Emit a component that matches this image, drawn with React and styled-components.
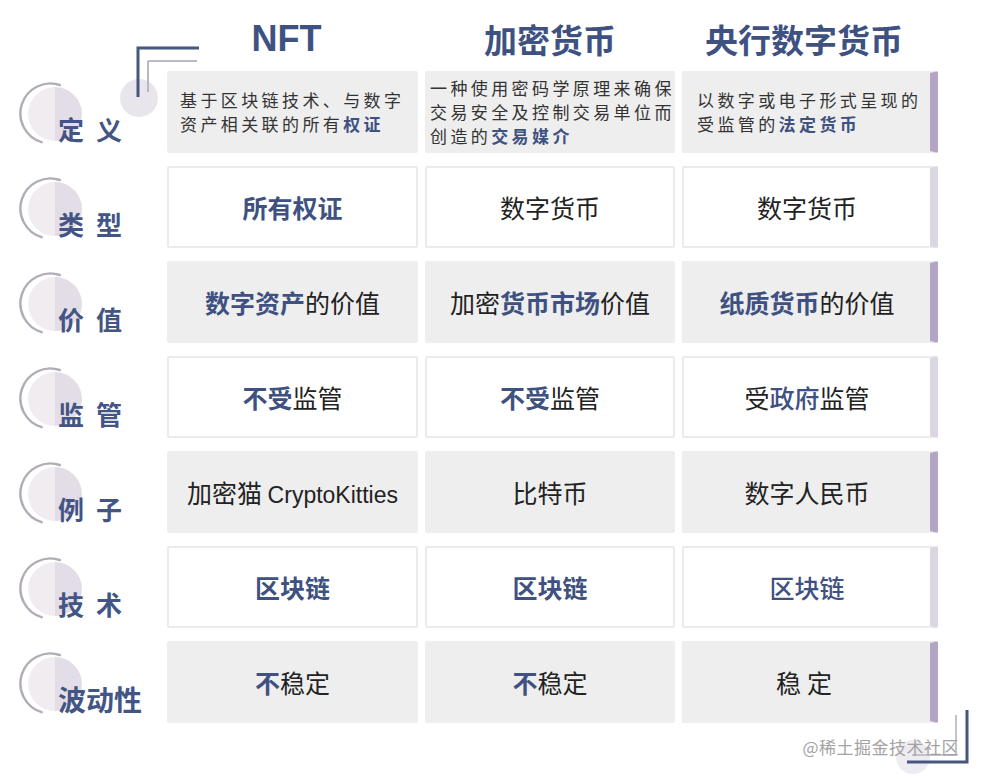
import React from "react";
import styled, { createGlobalStyle } from "styled-components";

const Global = createGlobalStyle`
  html, body { margin: 0; padding: 0; background: #ffffff; }
  body { font-family: "Noto Sans CJK SC", "Noto Sans", sans-serif; overflow: hidden; }
`;

const NAVY = "#3e5181";

const Page = styled.div`
  position: relative;
  width: 981px;
  height: 779px;
  background: #fff;
  overflow: hidden;
`;

const Table = styled.div`
  display: grid;
  grid-template-columns: 160px 251px 250px 256px;
  grid-template-rows: 58px repeat(7, 82px);
  column-gap: 7px;
  row-gap: 13px;
`;

const Head = styled.div`
  display: flex;
  align-items: center;
  justify-content: center;
  padding-top: 20px;
  padding-right: ${(p) => p.$shift || "0"};
  font-size: ${(p) => (p.$latin ? "36px" : "33px")};
  font-weight: 700;
  color: ${NAVY};
  line-height: 1;
  font-family: ${(p) =>
    p.$latin ? '"Liberation Sans", Arial, sans-serif' : '"Noto Sans CJK SC", sans-serif'};
`;

const LabelCell = styled.div`
  position: relative;
  padding-left: 58px;
  padding-top: 42px;
`;

const LabelText = styled.span`
  position: relative;
  display: block;
  font-size: ${(p) => (p.$wide ? "26px" : "28px")};
  letter-spacing: ${(p) => (p.$wide ? "12px" : "0")};
  line-height: 32px;
  font-weight: 700;
  color: #435585;
`;

const Badge = styled.svg`
  position: absolute;
  left: 17px;
  top: 7px;
  width: 72px;
  height: 72px;
`;

const Cell = styled.div`
  display: flex;
  align-items: center;
  justify-content: ${(p) => (p.$left ? "flex-start" : "center")};
  padding-left: ${(p) => (p.$pad ? p.$pad : "0")};
  background: ${(p) => (p.$grey ? "#eeeeee" : "#ffffff")};
  border: 2px solid ${(p) => (p.$grey ? "#eeeeee" : "#ebebeb")};
  border-right: ${(p) =>
    p.$bar ? `8px solid ${p.$grey ? "#b2a5c6" : "#dcd6e0"}` : `2px solid ${p.$grey ? "#eeeeee" : "#ebebeb"}`};
  border-radius: 2px;
  font-size: 25px;
  color: #222;
  white-space: nowrap;
`;

const SmallText = styled.div`
  font-size: 17px;
  line-height: 24px;
  letter-spacing: 3.4px;
  color: #333;
  white-space: nowrap;
`;

const Hi = styled.span`
  color: ${NAVY};
  font-weight: ${(p) => (p.$light ? 500 : 700)};
`;

const Latin = styled.span`
  font-family: "Liberation Sans", Arial, sans-serif;
  font-size: 23px;
`;

const Spaced = styled.span`
  letter-spacing: 6px;
`;

const Decor = styled.svg`
  position: absolute;
  pointer-events: none;
`;

const Watermark = styled.div`
  position: absolute;
  right: 22px;
  bottom: 20px;
  font-size: 17px;
  color: #a3a3a3;
  letter-spacing: 0.5px;
`;

function CircleBadge() {
  return (
    <Badge viewBox="0 0 72 72">
      <path d="M38 9 A27 27 0 0 0 38 63 Z" fill="#f1ecf0" />
      <path d="M38 9 A27 27 0 0 1 38 63 Z" fill="#e3dde7" />
      <path
        d="M42.8 7 A30 30 0 1 0 24.7 64.2"
        fill="none"
        stroke="#b1acb6"
        strokeWidth="2.4"
        strokeLinecap="round"
      />
    </Badge>
  );
}

const rows = [
  {
    label: "定义",
    wide: true,
    grey: true,
    cells: [
      <SmallText key="a">
        基于区块链技术、与数字
        <br />
        资产相关联的所有<Hi>权证</Hi>
      </SmallText>,
      <SmallText key="b">
        一种使用密码学原理来确保
        <br />
        交易安全及控制交易单位而
        <br />
        创造的<Hi>交易媒介</Hi>
      </SmallText>,
      <SmallText key="c">
        以数字或电子形式呈现的
        <br />
        受监管的<Hi>法定货币</Hi>
      </SmallText>,
    ],
    pads: ["11px", "3px", "13px"],
  },
  {
    label: "类型",
    wide: true,
    grey: false,
    cells: [<Hi key="a">所有权证</Hi>, "数字货币", "数字货币"],
  },
  {
    label: "价值",
    wide: true,
    grey: true,
    cells: [
      <span key="a">
        <Hi>数字资产</Hi>的价值
      </span>,
      <span key="b">
        加密<Hi>货币市场</Hi>价值
      </span>,
      <span key="c">
        <Hi>纸质货币</Hi>的价值
      </span>,
    ],
  },
  {
    label: "监管",
    wide: true,
    grey: false,
    cells: [
      <span key="a">
        <Hi>不受</Hi>监管
      </span>,
      <span key="b">
        <Hi>不受</Hi>监管
      </span>,
      <span key="c">
        受<Hi $light>政府</Hi>监管
      </span>,
    ],
  },
  {
    label: "例子",
    wide: true,
    grey: true,
    cells: [
      <span key="a">
        加密猫 <Latin>CryptoKitties</Latin>
      </span>,
      "比特币",
      "数字人民币",
    ],
  },
  {
    label: "技术",
    wide: true,
    grey: false,
    cells: [<Hi key="a">区块链</Hi>, <Hi key="b">区块链</Hi>, <Hi key="c" $light>区块链</Hi>],
  },
  {
    label: "波动性",
    wide: false,
    grey: true,
    cells: [
      <span key="a">
        <Hi>不</Hi>稳定
      </span>,
      <span key="b">
        <Hi>不</Hi>稳定
      </span>,
      <Spaced key="c">稳定</Spaced>,
    ],
  },
];

export default function App() {
  return (
    <Page>
      <Global />
      <Table>
        <div />
        <Head $latin $shift="12px">NFT</Head>
        <Head>加密货币</Head>
        <Head $shift="12px">央行数字货币</Head>
        {rows.map((r) => (
          <React.Fragment key={r.label}>
            <LabelCell>
              <CircleBadge />
              <LabelText $wide={r.wide}>{r.label}</LabelText>
            </LabelCell>
            {r.cells.map((c, i) => (
              <Cell
                key={i}
                $grey={r.grey}
                $bar={i === 2}
                $left={!!r.pads}
                $pad={r.pads ? r.pads[i] : undefined}
              >
                {c}
              </Cell>
            ))}
          </React.Fragment>
        ))}
      </Table>

      <Decor style={{ left: 115, top: 42 }} width="90" height="80" viewBox="0 0 90 80">
        <circle cx="24" cy="56" r="19" fill="#e9e5ec" />
        <path d="M33 19 H82 M33 19 V50" stroke="#bcb7c6" strokeWidth="2" fill="none" />
        <path d="M23 55 V6 H84" stroke="#46577f" strokeWidth="3" fill="none" />
      </Decor>

      <Decor style={{ left: 890, top: 705 }} width="85" height="70" viewBox="0 0 85 70">
        <circle cx="23" cy="52" r="17" fill="#efecf1" />
        <path d="M66 10 V50 H22" stroke="#c4c0cc" strokeWidth="2" fill="none" />
        <path d="M77 5 V57 H17" stroke="#46577f" strokeWidth="3" fill="none" />
      </Decor>

      <Watermark>@稀土掘金技术社区</Watermark>
    </Page>
  );
}
